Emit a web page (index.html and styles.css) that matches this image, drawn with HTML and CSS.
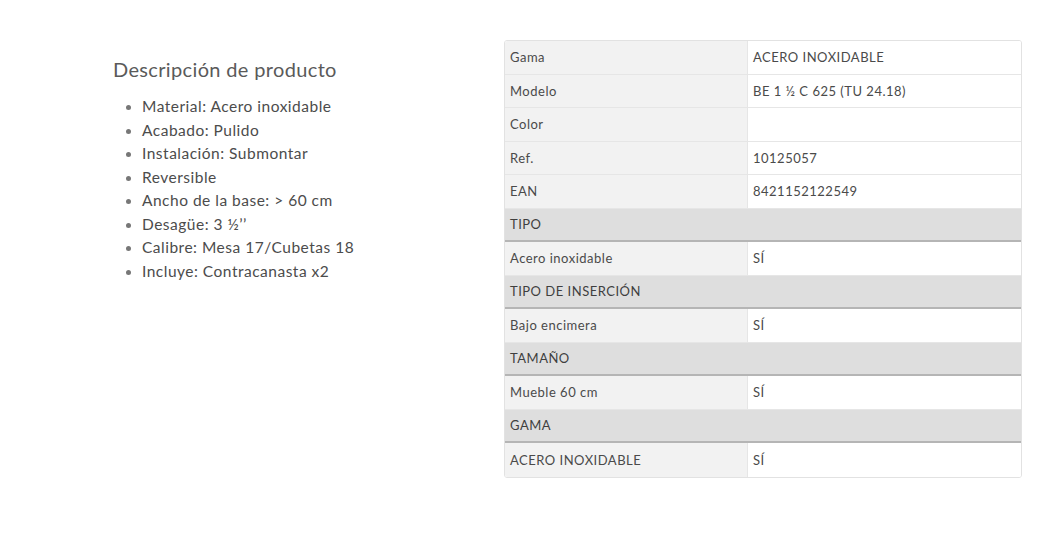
FILE: index.html
```html
<!DOCTYPE html>
<html lang="es">
<head>
<meta charset="utf-8">
<title>Descripción de producto</title>
<link rel="stylesheet" href="styles.css">
</head>
<body>
<div class="page">
  <section class="desc">
    <h2 class="desc-title">Descripción de producto</h2>
    <ul class="desc-list">
      <li>Material: Acero inoxidable</li>
      <li>Acabado: Pulido</li>
      <li>Instalación: Submontar</li>
      <li>Reversible</li>
      <li>Ancho de la base: &gt; 60 cm</li>
      <li>Desagüe: 3 ½’’</li>
      <li>Calibre: Mesa 17/Cubetas 18</li>
      <li>Incluye: Contracanasta x2</li>
    </ul>
  </section>
  <section class="specs">
    <table class="spec-table">
      <tbody>
        <tr><td class="k">Gama</td><td class="v">ACERO INOXIDABLE</td></tr>
        <tr><td class="k">Modelo</td><td class="v">BE 1 ½ C 625 (TU 24.18)</td></tr>
        <tr><td class="k">Color</td><td class="v"></td></tr>
        <tr><td class="k">Ref.</td><td class="v">10125057</td></tr>
        <tr><td class="k">EAN</td><td class="v">8421152122549</td></tr>
        <tr class="group"><td colspan="2">TIPO</td></tr>
        <tr><td class="k">Acero inoxidable</td><td class="v">SÍ</td></tr>
        <tr class="group"><td colspan="2">TIPO DE INSERCIÓN</td></tr>
        <tr><td class="k">Bajo encimera</td><td class="v">SÍ</td></tr>
        <tr class="group"><td colspan="2">TAMAÑO</td></tr>
        <tr><td class="k">Mueble 60 cm</td><td class="v">SÍ</td></tr>
        <tr class="group"><td colspan="2">GAMA</td></tr>
        <tr><td class="k">ACERO INOXIDABLE</td><td class="v">SÍ</td></tr>
      </tbody>
    </table>
  </section>
</div>
</body>
</html>
```
FILE: styles.css
```css
* { box-sizing: border-box; }
html, body { margin: 0; padding: 0; background: #fff; }
body {
  font-family: "Lato", "Open Sans", "Liberation Sans", sans-serif;
  color: #4a4a4a;
  width: 1044px;
  height: 554px;
  overflow: hidden;
}
.page {
  display: flex;
  padding: 40px 22px 0 113px;
}
.desc {
  width: 392px;
  padding-top: 17px;
}
.desc-title {
  margin: 0 0 14px 0;
  font-size: 20px;
  letter-spacing: 0.35px;
  font-weight: 400;
  line-height: 24px;
  color: #5a5a5a;
}
.desc-list {
  margin: 0;
  padding: 0 0 0 29px;
  font-size: 15.5px;
  letter-spacing: 0.5px;
  line-height: 23.5px;
  color: #4c4c4c;
}
.desc-list li::marker { color: #777; font-size: 14px; }
.specs { flex: 1; }
.spec-table {
  width: 518px;
  border-collapse: separate;
  border-spacing: 0;
  border: 1px solid #e2e2e2;
  border-radius: 3px;
  font-size: 13px;
  letter-spacing: 0.5px;
  color: #4a4a4a;
  overflow: hidden;
}
.spec-table td {
  height: 33.5px;
  padding: 0 5px;
  border-bottom: 1px solid #e6e6e6;
  vertical-align: middle;
}
.spec-table tr:last-child td { border-bottom: 0; }
.spec-table td.k {
  width: 243px;
  background: #f2f2f2;
  border-right: 1px solid #e6e6e6;
}
.spec-table td.v { background: #fff; }
.spec-table tr.group td {
  background: #dedede;
  border-bottom: 2px solid #b5b5b5;
  color: #3f3f3f;
}
```
